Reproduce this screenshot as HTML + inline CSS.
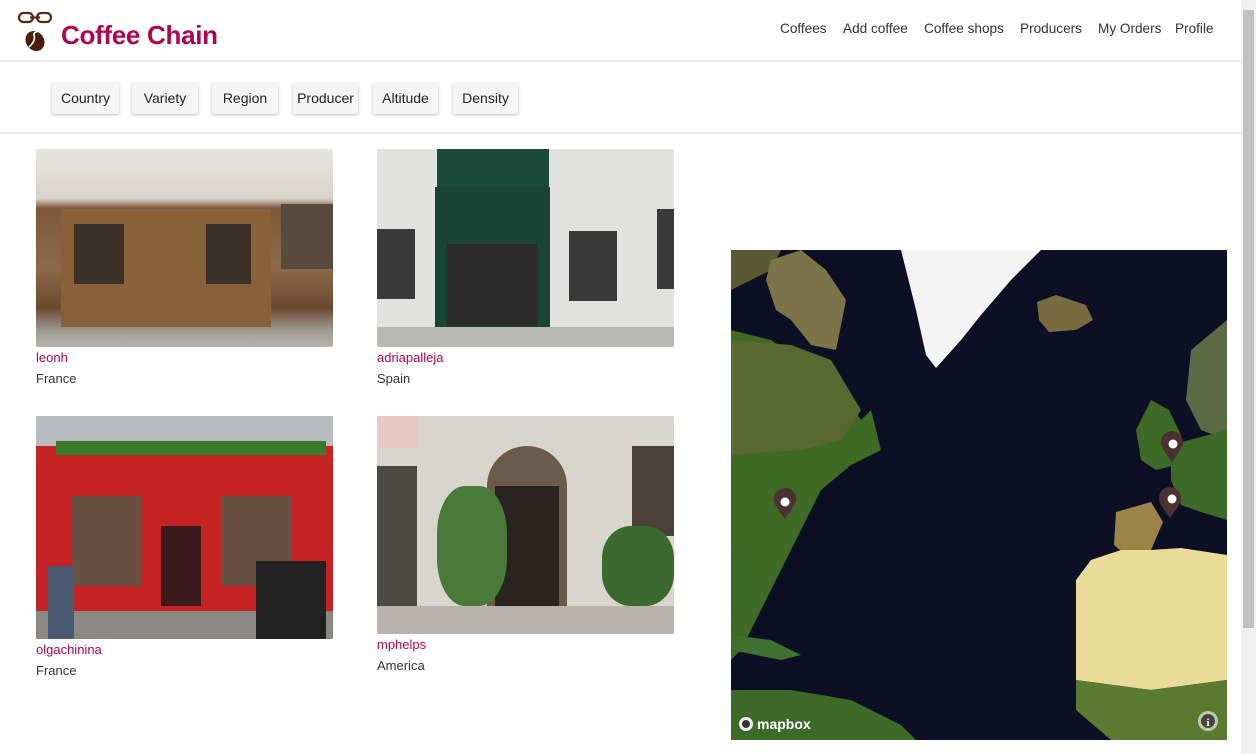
<!DOCTYPE html>
<html><head><meta charset="utf-8"><style>
*{margin:0;padding:0;box-sizing:border-box}
body{width:1256px;height:754px;overflow:hidden;background:#fff;font-family:"Liberation Sans",sans-serif;position:relative;color:#333}
.hdr{position:absolute;left:0;top:0;width:1241px;height:62px;border-bottom:2px solid #e8e8e8}
.title{position:absolute;left:61px;top:20px;font-size:26px;font-weight:bold;color:#b0044f;letter-spacing:-0.3px}
.nav{position:absolute;top:21px;font-size:13.6px;color:#333}
.fb{position:absolute;top:0;width:1241px;height:134px;border-bottom:2px solid #e6e6e6}
.btn{position:absolute;top:83px;height:31px;background:#f5f5f5;border-radius:2px;box-shadow:0 1px 3px rgba(0,0,0,.25);font-size:14px;color:#222;text-align:center;line-height:31px}
.img{position:absolute;border-radius:2px;overflow:hidden}
.name{position:absolute;font-size:13px;color:#b0044f}
.ctry{position:absolute;font-size:13px;color:#333}
.sb{position:absolute;left:1241px;top:0;width:15px;height:754px;background:#f1f1f1}
.th{position:absolute;left:1243px;top:10px;width:11px;height:618px;background:#c1c1c1}
</style></head><body>
<div class="hdr"></div>
<div class="fb"></div>
<svg style="position:absolute;left:17px;top:10px" width="36" height="44" viewBox="0 0 36 44">
<rect x="2" y="3" width="14" height="9" rx="4.5" fill="none" stroke="#5a2a12" stroke-width="2.2"/>
<rect x="20" y="3" width="14" height="9" rx="4.5" fill="none" stroke="#5a2a12" stroke-width="2.2"/>
<line x1="13" y1="7.5" x2="23" y2="7.5" stroke="#5a2a12" stroke-width="2.2"/>
<ellipse cx="18" cy="31" rx="9" ry="10.5" transform="rotate(-35 18 31)" fill="#4a1e08"/>
<path d="M12 37 Q19 31 17 25 Q16 22 23 21" stroke="#fff" stroke-width="1.6" fill="none"/>
</svg>
<div class="title">Coffee Chain</div>
<div class="nav" style="left:780px">Coffees</div>
<div class="nav" style="left:843px">Add coffee</div>
<div class="nav" style="left:924px">Coffee shops</div>
<div class="nav" style="left:1020px">Producers</div>
<div class="nav" style="left:1098px">My Orders</div>
<div class="nav" style="left:1175px">Profile</div>
<div class="btn" style="left:52px;width:67px">Country</div>
<div class="btn" style="left:132px;width:66px">Variety</div>
<div class="btn" style="left:212px;width:66px">Region</div>
<div class="btn" style="left:293px;width:65px">Producer</div>
<div class="btn" style="left:373px;width:65px">Altitude</div>
<div class="btn" style="left:453px;width:65px">Density</div>

<div class="img" style="left:36px;top:149px;width:297px;height:198px;background:linear-gradient(#e8e6e2 0,#d8d4cc 25%,#7a5a3a 30%,#8b6a48 60%,#6b4a30 80%,#a09c94 92%,#b8b4ac 100%)">
<div style="position:absolute;left:25px;top:60px;width:210px;height:118px;background:#8a6038"></div>
<div style="position:absolute;left:38px;top:75px;width:50px;height:60px;background:#3a3028"></div>
<div style="position:absolute;left:170px;top:75px;width:45px;height:60px;background:#3a3028"></div>
<div style="position:absolute;left:245px;top:55px;width:52px;height:65px;background:#5a4a3e"></div>
</div>
<div class="name" style="left:36px;top:350px">leonh</div>
<div class="ctry" style="left:36px;top:371px">France</div>

<div class="img" style="left:377px;top:149px;width:297px;height:198px;background:#e2e2e0">
<div style="position:absolute;left:60px;top:0;width:112px;height:38px;background:#1a4a3a"></div>
<div style="position:absolute;left:58px;top:38px;width:115px;height:140px;background:#184436"></div>
<div style="position:absolute;left:70px;top:95px;width:90px;height:82px;background:#2a2a2a"></div>
<div style="position:absolute;left:0;top:80px;width:38px;height:70px;background:#3a3a3a"></div>
<div style="position:absolute;left:192px;top:82px;width:48px;height:70px;background:#3a3a3a"></div>
<div style="position:absolute;left:280px;top:60px;width:17px;height:80px;background:#3a3a3a"></div>
<div style="position:absolute;left:0;top:178px;width:297px;height:20px;background:#b8b8b4"></div>
</div>
<div class="name" style="left:377px;top:350px">adriapalleja</div>
<div class="ctry" style="left:377px;top:371px">Spain</div>

<div class="img" style="left:36px;top:416px;width:297px;height:223px;background:#c62424">
<div style="position:absolute;left:0;top:0;width:297px;height:30px;background:#b8bcc0"></div>
<div style="position:absolute;left:20px;top:25px;width:270px;height:14px;background:#3a7a2a"></div>
<div style="position:absolute;left:35px;top:80px;width:70px;height:90px;background:#6a5040"></div>
<div style="position:absolute;left:185px;top:80px;width:70px;height:90px;background:#6a5040"></div>
<div style="position:absolute;left:125px;top:110px;width:40px;height:80px;background:#3a1a1a"></div>
<div style="position:absolute;left:0;top:195px;width:297px;height:28px;background:#8a8884"></div>
<div style="position:absolute;left:12px;top:150px;width:26px;height:73px;background:#4a5870"></div>
<div style="position:absolute;left:220px;top:145px;width:70px;height:78px;background:#222"></div>
</div>
<div class="name" style="left:36px;top:642px">olgachinina</div>
<div class="ctry" style="left:36px;top:663px">France</div>

<div class="img" style="left:377px;top:416px;width:297px;height:218px;background:#d8d6cc">
<div style="position:absolute;left:0;top:0;width:40px;height:32px;background:#e8c8c0"></div>
<div style="position:absolute;left:110px;top:30px;width:80px;height:160px;background:#6a5a4a;border-radius:40px 40px 0 0"></div>
<div style="position:absolute;left:118px;top:70px;width:64px;height:120px;background:#2a2420"></div>
<div style="position:absolute;left:255px;top:30px;width:42px;height:90px;background:#4a4238"></div>
<div style="position:absolute;left:0;top:50px;width:40px;height:140px;background:#4a4a42"></div>
<div style="position:absolute;left:60px;top:70px;width:70px;height:120px;background:#4a7a3a;border-radius:40%"></div>
<div style="position:absolute;left:225px;top:110px;width:72px;height:80px;background:#3a6a30;border-radius:40%"></div>
<div style="position:absolute;left:0;top:190px;width:297px;height:28px;background:#b8b4ac"></div>
</div>
<div class="name" style="left:377px;top:637px">mphelps</div>
<div class="ctry" style="left:377px;top:658px">America</div>

<svg style="position:absolute;left:731px;top:250px" width="496" height="490" viewBox="0 0 496 490">
<rect width="496" height="490" fill="#0d0f24"/>
<path d="M0 0H50L40 20L20 30L0 40Z" fill="#5a5a34"/>
<path d="M40 10L70 0L95 20L115 50L105 100L80 95L60 70L45 60L35 30Z" fill="#7a7448"/>
<path d="M0 80L40 90L70 110L105 130L130 170L140 160L150 200L120 215L90 240L75 270L60 300L45 330L30 360L10 400L0 410Z" fill="#3e6a24"/>
<path d="M0 90L60 95L100 110L130 160L110 190L70 200L0 205Z" fill="#596830"/>
<path d="M0 300L20 300L25 340L15 370L0 370Z" fill="#3a6a24"/>
<path d="M0 385L40 390L70 405L50 410L0 400Z" fill="#3e7030"/>
<path d="M0 440L60 440L120 450L170 475L185 490L0 490Z" fill="#3e6a28"/>
<path d="M170 0H310L280 30L250 65L230 90L205 118L195 105L185 60Z" fill="#f4f4f4"/>
<path d="M306 52L325 45L355 55L362 70L345 80L318 82L308 70Z" fill="#7a6a40"/>
<path d="M405 180L420 150L438 160L450 185L445 215L425 220L410 210Z" fill="#3e6a28"/>
<path d="M460 100L496 70L496 190L470 180L455 150Z" fill="#5a6a44"/>
<path d="M440 195L496 180L496 270L470 262L450 255L440 230Z" fill="#3e6a28"/>
<path d="M383 295L385 262L420 252L432 272L420 300L395 305Z" fill="#9a8448"/>
<path d="M345 330L360 310L390 300L420 300L450 298L496 305L496 430L420 440L345 430Z" fill="#e8dc98"/>
<path d="M345 430L420 440L496 430L496 490L380 490L345 460Z" fill="#5a7a30"/>
<g fill="#4a3232"><path d="M54 269c-8-11-11-15-11-20a11 11 0 0 1 22 0c0 5-3 9-11 20z"/>
<path d="M441 212c-8-11-11-15-11-20a11 11 0 0 1 22 0c0 5-3 9-11 20z"/>
<path d="M439 268c-8-11-11-15-11-20a11 11 0 0 1 22 0c0 5-3 9-11 20z"/></g>
<g fill="#fff"><circle cx="54" cy="252" r="4.5"/><circle cx="442" cy="194" r="4.5"/><circle cx="441" cy="249" r="4.5"/></g>
<circle cx="15" cy="474" r="7" fill="#fff" opacity=".9"/><circle cx="15" cy="474" r="4" fill="#333"/>
<text x="26" y="479" font-family="Liberation Sans,sans-serif" font-size="14" font-weight="bold" fill="#fff">mapbox</text>
<circle cx="477" cy="471" r="10" fill="#fff" opacity=".6"/><circle cx="477" cy="471" r="7" fill="#444"/>
<text x="475.5" y="476" font-family="Liberation Serif,serif" font-size="11" font-weight="bold" fill="#fff">i</text>
</svg>
<div class="sb"></div><div class="th"></div>
</body></html>
